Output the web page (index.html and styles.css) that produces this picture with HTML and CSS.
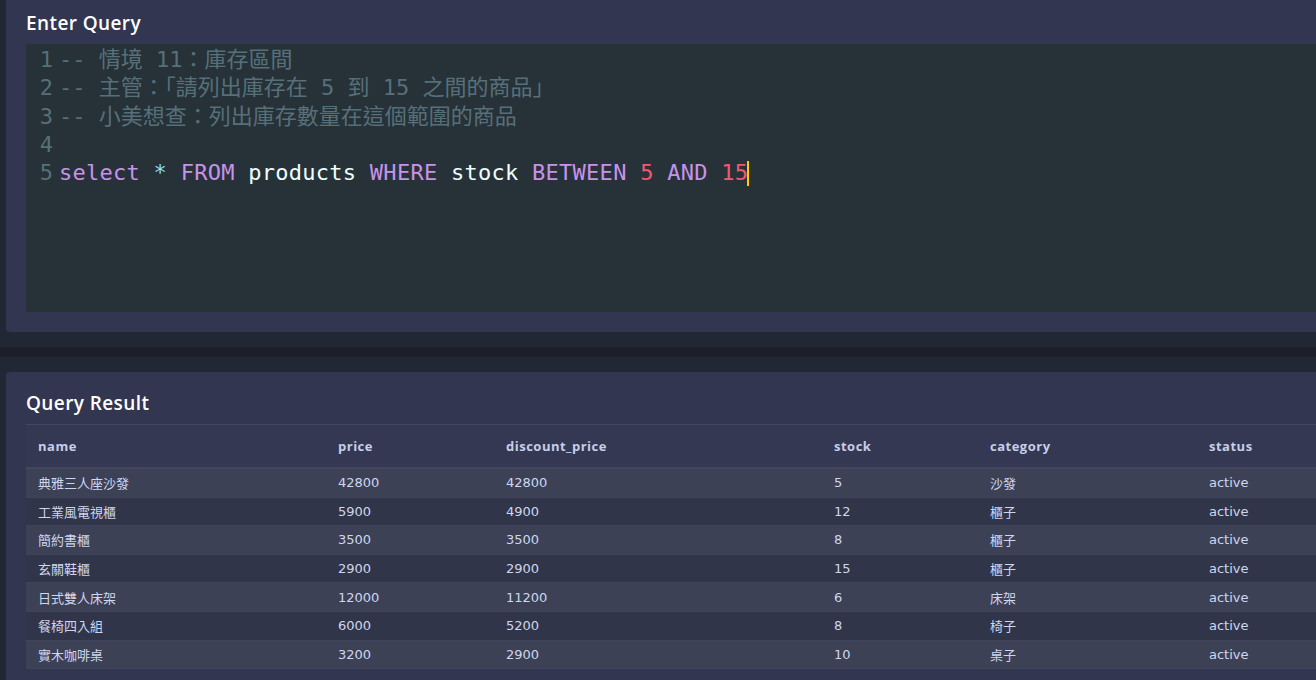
FILE: index.html
```html
<!DOCTYPE html>
<html lang="zh-Hant">
<head>
<meta charset="utf-8">
<title>SQL Query</title>
<link rel="stylesheet" href="styles.css">
</head>
<body>
<div class="page">
  <section class="panel panel-query">
    <h2 class="panel-title">Enter Query</h2>
    <div class="editor">
      <div class="line"><span class="ln">1</span><span class="code"><span class="cm">-- 情境 11：庫存區間</span></span></div>
      <div class="line"><span class="ln">2</span><span class="code"><span class="cm">-- 主管：「請列出庫存在 5 到 15 之間的商品」</span></span></div>
      <div class="line"><span class="ln">3</span><span class="code"><span class="cm">-- 小美想查：列出庫存數量在這個範圍的商品</span></span></div>
      <div class="line"><span class="ln">4</span><span class="code"></span></div>
      <div class="line"><span class="ln">5</span><span class="code code-sql"><span class="kw">select</span> <span class="op">*</span> <span class="kw">FROM</span> <span class="id">products</span> <span class="kw">WHERE</span> <span class="id">stock</span> <span class="kw">BETWEEN</span> <span class="num">5</span> <span class="kw">AND</span> <span class="num">15</span><span class="cursor"></span></span></div>
    </div>
  </section>
  <div class="divider"></div>
  <section class="panel panel-result">
    <h2 class="panel-title">Query Result</h2>
    <table class="result">
      <colgroup>
        <col class="c-name"><col class="c-price"><col class="c-disc"><col class="c-stock"><col class="c-cat"><col class="c-status">
      </colgroup>
      <thead>
        <tr><th>name</th><th>price</th><th>discount_price</th><th>stock</th><th>category</th><th>status</th></tr>
      </thead>
      <tbody>
        <tr><td>典雅三人座沙發</td><td>42800</td><td>42800</td><td>5</td><td>沙發</td><td>active</td></tr>
        <tr><td>工業風電視櫃</td><td>5900</td><td>4900</td><td>12</td><td>櫃子</td><td>active</td></tr>
        <tr><td>簡約書櫃</td><td>3500</td><td>3500</td><td>8</td><td>櫃子</td><td>active</td></tr>
        <tr><td>玄關鞋櫃</td><td>2900</td><td>2900</td><td>15</td><td>櫃子</td><td>active</td></tr>
        <tr><td>日式雙人床架</td><td>12000</td><td>11200</td><td>6</td><td>床架</td><td>active</td></tr>
        <tr><td>餐椅四入組</td><td>6000</td><td>5200</td><td>8</td><td>椅子</td><td>active</td></tr>
        <tr><td>實木咖啡桌</td><td>3200</td><td>2900</td><td>10</td><td>桌子</td><td>active</td></tr>
      </tbody>
    </table>
  </section>
</div>
</body>
</html>
```

FILE: styles.css
```css
html, body {
  margin: 0;
  padding: 0;
  background: #222736;
  overflow: hidden;
  height: 100%;
}

body {
  font-family: "Open Sans", "Noto Sans CJK TC", sans-serif;
  color: #c9d1e9;
}

.page {
  padding-left: 6px;
  width: 1340px;
}

.panel {
  background: #323650;
  border-radius: 4px;
  padding: 0 20px 20px 20px;
}

.panel-query {
  padding-top: 11px;
  border-top-left-radius: 0;
  border-top-right-radius: 0;
}

.panel-result {
  padding-top: 19px;
  height: 400px;
}

.panel-title {
  margin: 0 0 9px 0;
  font-size: 19px;
  line-height: 24px;
  font-weight: 600;
  color: #ffffff;
  letter-spacing: 0.4px;
}

.divider {
  height: 10px;
  margin: 15px 0 15px -6px;
  background: #1d2029;
}

.editor {
  background: #273238;
  height: 268px;
  box-sizing: border-box;
  padding-top: 2px;
  font-family: "DejaVu Sans Mono", "Noto Sans CJK TC", monospace;
  font-size: 22px;
  line-height: 28.3px;
  color: #eeffff;
}

.line {
  display: flex;
  white-space: pre;
}

.ln {
  width: 33px;
  box-sizing: border-box;
  padding-right: 6px;
  text-align: right;
  color: #56707a;
  flex: none;
}

.code {
  position: relative;
}

.code-sql {
  letter-spacing: 0.27px;
}

.cm { color: #56707a; }
.kw { color: #c792ea; }
.op { color: #89ddff; }
.id { color: #eeffff; }
.num { color: #f2576f; }

.cursor {
  display: inline-block;
  width: 2px;
  height: 25px;
  vertical-align: -6px;
  background: #ffcc00;
  margin-left: -1px;
}

.result {
  border-collapse: collapse;
  table-layout: fixed;
  width: 1320px;
  font-size: 13px;
  border-top: 1px solid #41475f;
}

.c-name { width: 300px; }
.c-price { width: 168px; }
.c-disc { width: 328px; }
.c-stock { width: 156px; }
.c-cat { width: 219px; }
.c-status { width: 149px; }

.result th {
  text-align: left;
  font-weight: 700;
  color: #c6cee8;
  height: 42px;
  padding: 0 12px;
  background: #343852;
  border-bottom: 2px solid #41475f;
  letter-spacing: 0.5px;
}

.result td {
  height: 27.6px;
  padding: 0 12px;
  border-bottom: 1px solid #3e445c;
  color: #cfd6ee;
  white-space: nowrap;
  font-family: "DejaVu Sans", "Noto Sans CJK TC", sans-serif;
}

.result tbody tr:nth-child(odd) td { background: #3c4156; }
.result tbody tr:nth-child(even) td { background: #30354a; }
```
